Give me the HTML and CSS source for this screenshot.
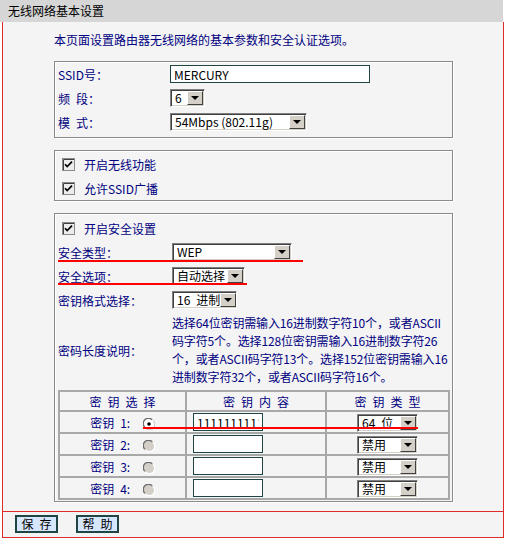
FILE: index.html
```html
<!DOCTYPE html>
<html lang="zh-CN">
<head>
  <meta charset="UTF-8">
  <title>无线网络基本设置</title>
  <link rel="stylesheet" href="styles.css">
</head>
<body>

  <div class="titlebar">无线网络基本设置</div>

  <div class="panel">
    <div class="content">
      <p class="intro">本页面设置路由器无线网络的基本参数和安全认证选项。</p>

      <div class="group basic">
        <div class="row">
          <span class="label">SSID号：</span>
          <input type="text" class="text ssid" value="MERCURY">
        </div>
        <div class="row">
          <span class="label">频&ensp;段：</span>
          <span class="select w-channel"><span class="val">6</span><span class="drop"><i></i></span></span>
        </div>
        <div class="row">
          <span class="label">模&ensp;式：</span>
          <span class="select w-mode"><span class="val">54Mbps (802.11g)</span><span class="drop"><i></i></span></span>
        </div>
      </div>

      <div class="group switches">
        <div class="row check-row">
          <svg class="checkbox" width="13" height="13" viewBox="0 0 13 13">
            <rect x="0.5" y="0.5" width="12" height="12" fill="#ececec" stroke="#8a8a8a"/>
            <path d="M1.5 12 V1.5 H12" fill="none" stroke="#404040"/>
            <path d="M3 6.2 L5.2 8.6 L10 3.6" fill="none" stroke="#000" stroke-width="1.7"/>
          </svg>
          <span class="check-label">开启无线功能</span>
        </div>
        <div class="row check-row">
          <svg class="checkbox" width="13" height="13" viewBox="0 0 13 13">
            <rect x="0.5" y="0.5" width="12" height="12" fill="#ececec" stroke="#8a8a8a"/>
            <path d="M1.5 12 V1.5 H12" fill="none" stroke="#404040"/>
            <path d="M3 6.2 L5.2 8.6 L10 3.6" fill="none" stroke="#000" stroke-width="1.7"/>
          </svg>
          <span class="check-label">允许SSID广播</span>
        </div>
      </div>

      <div class="group security">
        <div class="row check-row">
          <svg class="checkbox" width="13" height="13" viewBox="0 0 13 13">
            <rect x="0.5" y="0.5" width="12" height="12" fill="#ececec" stroke="#8a8a8a"/>
            <path d="M1.5 12 V1.5 H12" fill="none" stroke="#404040"/>
            <path d="M3 6.2 L5.2 8.6 L10 3.6" fill="none" stroke="#000" stroke-width="1.7"/>
          </svg>
          <span class="check-label">开启安全设置</span>
        </div>
        <div class="row marked">
          <span class="label wide">安全类型：</span>
          <span class="select w-type"><span class="val">WEP</span><span class="drop"><i></i></span></span>
          <span class="underline u-type"></span>
        </div>
        <div class="row marked">
          <span class="label wide">安全选项：</span>
          <span class="select w-option"><span class="val">自动选择</span><span class="drop"><i></i></span></span>
          <span class="underline u-option"></span>
        </div>
        <div class="row">
          <span class="label wide">密钥格式选择：</span>
          <span class="select w-format"><span class="val">16&ensp;进制</span><span class="drop"><i></i></span></span>
        </div>
        <div class="row desc-row">
          <span class="label wide">密码长度说明：</span>
          <p class="desc">选择64位密钥需输入16进制数字符10个，或者ASCII<br>码字符5个。选择128位密钥需输入16进制数字符26<br>个，或者ASCII码字符13个。选择152位密钥需输入16<br>进制数字符32个，或者ASCII码字符16个。</p>
        </div>

        <div class="keys">
          <table>
            <colgroup>
              <col class="c1">
              <col class="c2">
              <col class="c3">
            </colgroup>
            <thead>
              <tr>
                <th>密钥选择</th>
                <th>密钥内容</th>
                <th>密钥类型</th>
              </tr>
            </thead>
            <tbody>
              <tr>
                <td class="pick">密钥&ensp;1:
                  <svg class="radio" width="12" height="12" viewBox="0 0 12 12">
                    <circle cx="6" cy="6" r="5.5" fill="#fff"/>
                    <path d="M1.8 9.2 A5 5 0 0 1 9.2 1.8" fill="none" stroke="#6e6e6e" stroke-width="1.3"/>
                    <path d="M2.8 10.2 A5 5 0 0 0 10.2 2.8" fill="none" stroke="#d4d0c8" stroke-width="1.3"/>
                    <circle cx="6" cy="6" r="1.8" fill="#000"/>
                  </svg>
                </td>
                <td class="content-cell"><input type="text" class="text key" value="1111111111"></td>
                <td class="type-cell"><span class="select w-key"><span class="val">64&ensp;位</span><span class="drop"><i></i></span></span></td>
              </tr>
              <tr>
                <td class="pick">密钥&ensp;2:
                  <svg class="radio" width="12" height="12" viewBox="0 0 12 12">
                    <circle cx="6" cy="6" r="5.5" fill="#d4d0c8"/>
                    <path d="M1.8 9.2 A5 5 0 0 1 9.2 1.8" fill="none" stroke="#6e6e6e" stroke-width="1.3"/>
                    <path d="M2.8 10.2 A5 5 0 0 0 10.2 2.8" fill="none" stroke="#fff" stroke-width="1.3"/>
                  </svg>
                </td>
                <td class="content-cell"><input type="text" class="text key" value=""></td>
                <td class="type-cell"><span class="select w-key"><span class="val">禁用</span><span class="drop"><i></i></span></span></td>
              </tr>
              <tr>
                <td class="pick">密钥&ensp;3:
                  <svg class="radio" width="12" height="12" viewBox="0 0 12 12">
                    <circle cx="6" cy="6" r="5.5" fill="#d4d0c8"/>
                    <path d="M1.8 9.2 A5 5 0 0 1 9.2 1.8" fill="none" stroke="#6e6e6e" stroke-width="1.3"/>
                    <path d="M2.8 10.2 A5 5 0 0 0 10.2 2.8" fill="none" stroke="#fff" stroke-width="1.3"/>
                  </svg>
                </td>
                <td class="content-cell"><input type="text" class="text key" value=""></td>
                <td class="type-cell"><span class="select w-key"><span class="val">禁用</span><span class="drop"><i></i></span></span></td>
              </tr>
              <tr>
                <td class="pick">密钥&ensp;4:
                  <svg class="radio" width="12" height="12" viewBox="0 0 12 12">
                    <circle cx="6" cy="6" r="5.5" fill="#d4d0c8"/>
                    <path d="M1.8 9.2 A5 5 0 0 1 9.2 1.8" fill="none" stroke="#6e6e6e" stroke-width="1.3"/>
                    <path d="M2.8 10.2 A5 5 0 0 0 10.2 2.8" fill="none" stroke="#fff" stroke-width="1.3"/>
                  </svg>
                </td>
                <td class="content-cell"><input type="text" class="text key" value=""></td>
                <td class="type-cell"><span class="select w-key"><span class="val">禁用</span><span class="drop"><i></i></span></span></td>
              </tr>
            </tbody>
          </table>
          <span class="underline u-key"></span>
        </div>
      </div>
    </div>

    <div class="buttons">
      <button type="button" class="act">保&ensp;存</button>
      <button type="button" class="act">帮&ensp;助</button>
    </div>
  </div>

</body>
</html>
```

FILE: styles.css
```css
body {
  margin: 0;
  font-family: "Noto Sans CJK SC", sans-serif;
  font-size: 12px;
  background: #ffffff;
  color: #000080;
}

.titlebar {
  width: 503px;
  height: 22px;
  box-sizing: border-box;
  padding-left: 8px;
  line-height: 22px;
  background: #d6d6d6;
  color: #000;
}

.panel {
  margin-left: 2px;
  width: 502px;
  height: 516px;
  box-sizing: border-box;
  border: 1px solid #e02a2a;
  border-top: none;
  background: #f4f4f4;
  display: flex;
  flex-direction: column;
}

.content {
  padding: 10px 0 0 51px;
}

.intro {
  margin: 0 0 13px 0;
  line-height: 16px;
  color: #000080;
}

.group {
  width: 399px;
  box-sizing: border-box;
  border: 1px solid #8a8a8a;
  box-shadow: 1px 1px 0 #ffffff, inset 1px 1px 0 #ffffff;
}

.basic {
  padding: 0 0 3px 0;
}

.switches {
  margin-top: 12px;
  padding: 1px 0 0 0;
}

.security {
  margin-top: 12px;
  padding: 2px 0 1px 0;
}

.row {
  height: 24px;
  padding-left: 3px;
  display: flex;
  align-items: center;
}

.label {
  width: 112px;
  flex-shrink: 0;
  color: #000080;
}

.label.wide {
  width: 114px;
}

.check-row {
  padding-left: 7px;
}

.checkbox {
  display: block;
  margin-right: 9px;
}

.check-label {
  color: #000080;
}

.marked {
  position: relative;
}

.underline {
  position: absolute;
  height: 2px;
  background: #ff0000;
}

.u-type {
  left: 3px;
  top: 20px;
  width: 245px;
}

.u-option {
  left: 3px;
  top: 19px;
  width: 189px;
}

.desc-row {
  height: auto;
  padding-top: 2px;
}

.desc {
  margin: 0;
  line-height: 18px;
  letter-spacing: -0.15px;
  white-space: nowrap;
  color: #000080;
}

/* text boxes */
.text {
  height: 18px;
  box-sizing: border-box;
  border: 1px solid #1e4444;
  background: #ffffff;
  padding: 0 3px;
  margin: 0;
  font-family: "Noto Sans CJK SC", sans-serif;
  font-size: 12px;
  color: #000;
  outline: none;
}

.ssid {
  width: 200px;
}

.key {
  width: 70px;
}

/* old-style drop down */
.select {
  display: inline-flex;
  align-items: stretch;
  height: 18px;
  box-sizing: border-box;
  border-top: 1px solid #808080;
  border-left: 1px solid #808080;
  border-bottom: 1px solid #ffffff;
  border-right: 1px solid #ffffff;
  box-shadow: inset 1px 1px 0 #404040, inset -1px -1px 0 #d4d0c8;
  background: #ffffff;
  padding: 1px;
  flex-shrink: 0;
}

.select .val {
  flex: 1;
  display: flex;
  align-items: center;
  padding-left: 3px;
  line-height: 12px;
  color: #000;
  white-space: nowrap;
  text-align: left;
}

.drop {
  width: 16px;
  flex-shrink: 0;
  box-sizing: border-box;
  background: #d4d0c8;
  border-top: 1px solid #ffffff;
  border-left: 1px solid #ffffff;
  border-right: 1px solid #404040;
  border-bottom: 1px solid #404040;
  display: flex;
  align-items: center;
  justify-content: center;
}

.drop i {
  width: 0;
  height: 0;
  border-left: 4px solid transparent;
  border-right: 4px solid transparent;
  border-top: 4px solid #000;
}

.w-channel { width: 35px; }
.w-mode { width: 137px; }
.w-type { width: 120px; }
.w-option { width: 73px; }
.w-format { width: 65px; }
.w-key { width: 61px; }

/* key table */
.keys {
  position: relative;
  margin: 4px 0 0 3px;
}

table {
  width: 390px;
  border-collapse: collapse;
  table-layout: fixed;
}

.c1 { width: 127px; }
.c2 { width: 140px; }
.c3 { width: 123px; }

th, td {
  border: 2px solid #a8a8a8;
  padding: 0;
  color: #000080;
}

th {
  height: 18px;
  font-weight: normal;
  letter-spacing: 6px;
  text-indent: 6px;
  text-align: center;
}

td {
  height: 20px;
}

.pick {
  text-align: center;
  white-space: nowrap;
}

.radio {
  vertical-align: middle;
  margin-left: 10px;
}

.content-cell {
  padding-left: 6px;
}

.content-cell .text {
  display: block;
}

.type-cell {
  text-align: center;
}

.type-cell .select {
  vertical-align: middle;
}

.u-key {
  left: 85px;
  top: 37px;
  width: 275px;
}

/* bottom buttons */
.buttons {
  margin-top: auto;
  border-top: 1px solid #e02a2a;
  padding: 3px 0 4px 12px;
  display: flex;
  gap: 18px;
}

.act {
  width: 43px;
  height: 18px;
  box-sizing: border-box;
  border: 2px solid #1e4444;
  background: #d6e6fb;
  padding: 0;
  font-family: "Noto Sans CJK SC", sans-serif;
  font-size: 12px;
  line-height: 14px;
  color: #000;
}
```
